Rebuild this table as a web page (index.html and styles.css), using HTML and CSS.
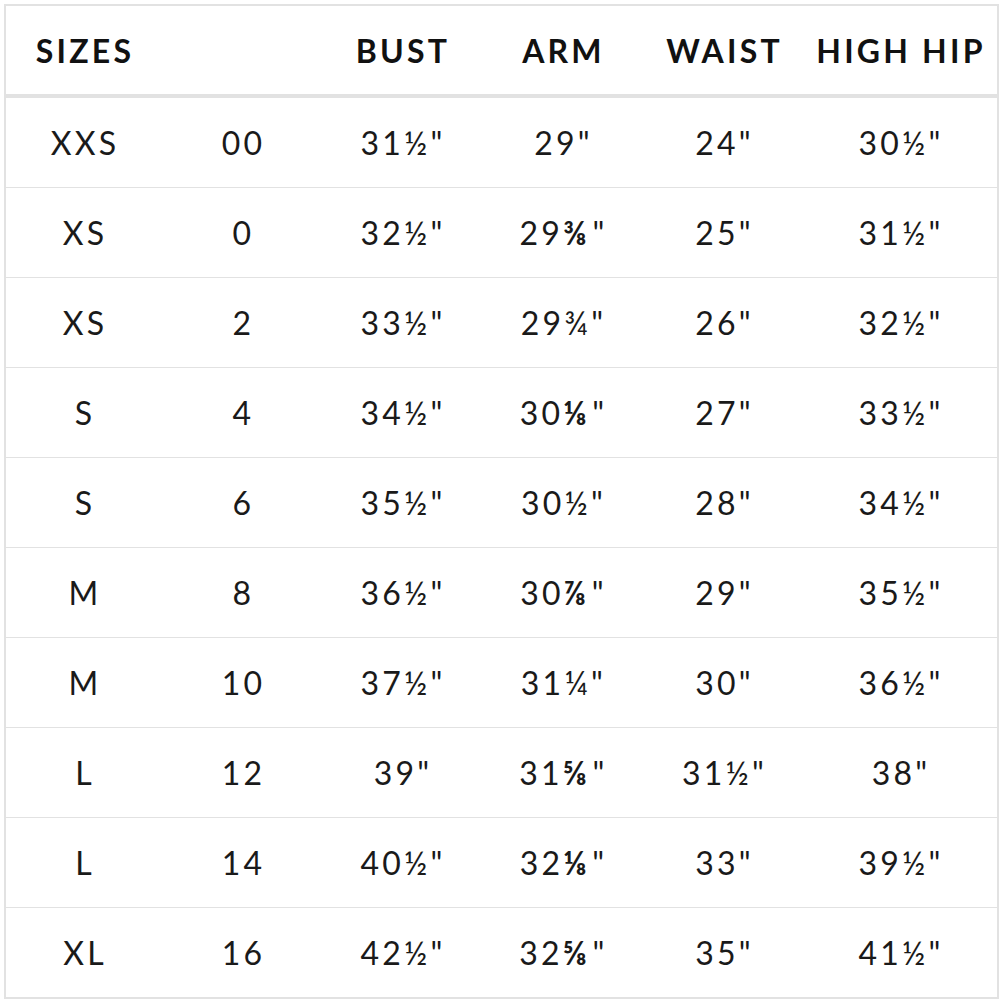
FILE: index.html
```html
<!DOCTYPE html>
<html>
<head>
<meta charset="utf-8">
<link rel="stylesheet" href="styles.css">
</head>
<body>
<div class="chart">
<table class="sizes">
<colgroup>
<col class="c1"><col class="c2"><col class="c3"><col class="c4"><col class="c5"><col class="c6">
</colgroup>
<thead>
<tr><th>SIZES</th><th></th><th>BUST</th><th>ARM</th><th>WAIST</th><th>HIGH HIP</th></tr>
</thead>
<tbody>
<tr><td>XXS</td><td>00</td><td>31½"</td><td>29"</td><td>24"</td><td>30½"</td></tr>
<tr><td>XS</td><td>0</td><td>32½"</td><td>29<span class="eighth">⅜</span>"</td><td>25"</td><td>31½"</td></tr>
<tr><td>XS</td><td>2</td><td>33½"</td><td>29¾"</td><td>26"</td><td>32½"</td></tr>
<tr><td>S</td><td>4</td><td>34½"</td><td>30<span class="eighth">⅛</span>"</td><td>27"</td><td>33½"</td></tr>
<tr><td>S</td><td>6</td><td>35½"</td><td>30½"</td><td>28"</td><td>34½"</td></tr>
<tr><td>M</td><td>8</td><td>36½"</td><td>30<span class="eighth">⅞</span>"</td><td>29"</td><td>35½"</td></tr>
<tr><td>M</td><td>10</td><td>37½"</td><td>31¼"</td><td>30"</td><td>36½"</td></tr>
<tr><td>L</td><td>12</td><td>39"</td><td>31<span class="eighth">⅝</span>"</td><td>31½"</td><td>38"</td></tr>
<tr><td>L</td><td>14</td><td>40½"</td><td>32<span class="eighth">⅛</span>"</td><td>33"</td><td>39½"</td></tr>
<tr><td>XL</td><td>16</td><td>42½"</td><td>32<span class="eighth">⅝</span>"</td><td>35"</td><td>41½"</td></tr>
</tbody>
</table>
</div>
</body>
</html>
```

FILE: styles.css
```css
html, body {
  margin: 0;
  padding: 0;
  background: #ffffff;
}

body {
  padding: 4px 0 0 4px;
}

.chart {
  width: 991px;
  border: 2px solid #e2e2e2;
}

.sizes {
  width: 991px;
  border-collapse: collapse;
  table-layout: fixed;
  font-family: Lato, "Open Sans", sans-serif;
  color: #1a1a1a;
}

.c1 { width: 158px; }
.c2 { width: 159px; }
.c3 { width: 160px; }
.c4 { width: 161px; }
.c5 { width: 161px; }
.c6 { width: 192px; }

.sizes th {
  height: 88px;
  padding: 0;
  font-size: 32px;
  font-weight: 700;
  letter-spacing: 0.1em;
  text-align: center;
  color: #111;
  border-bottom: 4px solid #e2e2e2;
}

.sizes td {
  height: 89px;
  padding: 0;
  font-size: 32px;
  font-weight: 400;
  letter-spacing: 0.1em;
  text-align: center;
  border-bottom: 1px solid #e2e2e2;
}

.sizes tbody tr:last-child td {
  border-bottom: none;
}

.eighth {
  font-weight: 700;
  letter-spacing: 0.18em;
}
```
